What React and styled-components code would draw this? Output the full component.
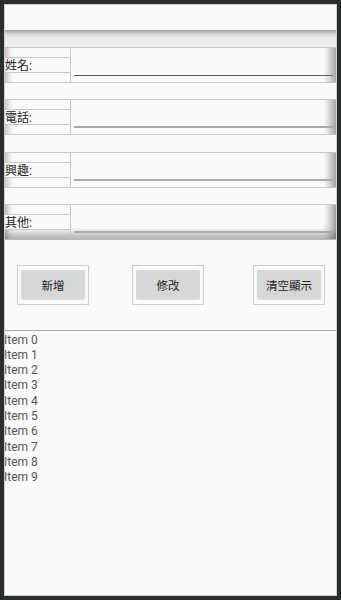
import React from 'react';
import styled, { createGlobalStyle } from 'styled-components';

const GlobalStyle = createGlobalStyle`
  html, body {
    margin: 0;
    padding: 0;
    background: #2a2d2e;
  }
  body {
    font-family: Roboto, "Noto Sans CJK TC", "Noto Sans", sans-serif;
  }
`;

const Screen = styled.div`
  box-sizing: border-box;
  margin: 4px;
  width: 333px;
  height: 592px;
  background: #fafafa;
  border: 1px solid #cfcfcf;
  display: flex;
  flex-direction: column;
  overflow: hidden;
`;

const TopSpace = styled.div`
  height: 25px;
  flex: none;
`;

const ShadowBand = styled.div`
  height: 16.5px;
  flex: none;
  background: linear-gradient(#9c9c9c, #d8d8d8 4px, #ececec 8px, #f1f1f1);
`;

const Form = styled.div`
  display: flex;
  flex-direction: column;
  gap: 16.5px;
  flex: none;
`;

const Row = styled.div`
  display: flex;
  height: 36px;
  box-sizing: border-box;
  border-top: 1px solid #c6c6c6;
  border-bottom: 1px solid ${p => (p.$last ? '#b8b8b8' : '#c6c6c6')};
  background: linear-gradient(to right, #c4c4c4, #ececec 5px, #fafafa 9px, #fafafa calc(100% - 12px), #e0e0e0 calc(100% - 8px), #a4a4a4);
  box-shadow: ${p => (p.$last ? 'inset 0 -9px 7px -3px rgba(0,0,0,0.28)' : 'none')};
`;

const LabelCol = styled.div`
  width: 65px;
  flex: none;
  display: flex;
  flex-direction: column;
  border-right: 1px solid #c6c6c6;
`;

const Cell = styled.div`
  flex: none;
  height: ${p => p.$h}px;
  box-sizing: border-box;
  border-bottom: ${p => (p.$line ? '1px solid #c6c6c6' : 'none')};
`;

const LabelCell = styled.div`
  height: 15px;
  flex: none;
  box-sizing: border-box;
  background: #fafafa;
  border-bottom: 1px solid #c6c6c6;
  font-size: 12px;
  line-height: 17px;
  color: #222;
  white-space: nowrap;
`;

const InputArea = styled.div`
  flex: 1;
  display: flex;
  align-items: flex-end;
  padding: 0 3px 6px 3px;
`;

const Underline = styled.div`
  width: 100%;
  height: ${p => (p.$focus ? 1 : 2)}px;
  background: ${p => (p.$focus ? '#5e5e5e' : '#a9a9a9')};
`;

const ButtonBar = styled.div`
  height: 90px;
  flex: none;
  display: flex;
  align-items: center;
  padding-left: 12px;
  border-bottom: 1px solid #a8a8a8;
`;

const ButtonFrame = styled.div`
  box-sizing: border-box;
  width: 72px;
  height: 40px;
  margin-left: ${p => p.$gap || 0}px;
  border: 1px solid #cbcbcb;
  padding: 4px 3px 5px 3px;
  display: flex;
`;

const Button = styled.button`
  flex: 1;
  border: none;
  border-radius: 2px;
  background: #d6d7d7;
  box-shadow: 0 1px 1px rgba(0,0,0,0.12);
  font-family: Roboto, "Noto Sans CJK TC", sans-serif;
  font-size: 11.5px;
  color: #222;
  padding: 0;
  white-space: nowrap;
`;

const List = styled.div`
  display: flex;
  flex-direction: column;
  padding-top: 1.5px;
`;

const Item = styled.div`
  height: 15.33px;
  line-height: 15.33px;
  font-size: 12px;
  color: #555;
  margin-left: -1px;
`;

const fields = ['姓名:', '電話:', '興趣:', '其他:'];

export default function App() {
  return (
    <>
      <GlobalStyle />
      <Screen>
        <TopSpace />
        <ShadowBand />
        <Form>
          {fields.map((f, i) => (
            <Row key={f} $last={i === fields.length - 1}>
              <LabelCol>
                <Cell $h={10} $line />
                <LabelCell>{f}</LabelCell>
                <Cell $h={9} />
              </LabelCol>
              <InputArea>
                <Underline $focus={i === 0} />
              </InputArea>
            </Row>
          ))}
        </Form>
        <ButtonBar>
          <ButtonFrame><Button>新增</Button></ButtonFrame>
          <ButtonFrame $gap={43}><Button>修改</Button></ButtonFrame>
          <ButtonFrame $gap={49}><Button>清空顯示</Button></ButtonFrame>
        </ButtonBar>
        <List>
          {Array.from({ length: 10 }, (_, i) => (
            <Item key={i}>Item {i}</Item>
          ))}
        </List>
      </Screen>
    </>
  );
}
